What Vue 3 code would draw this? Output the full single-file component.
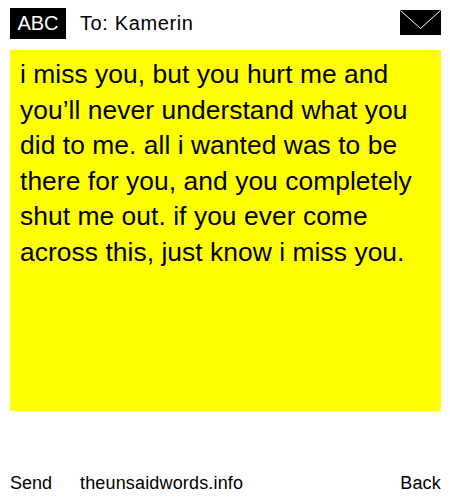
<script setup>
const message = "i miss you, but you hurt me and you’ll never understand what you did to me. all i wanted was to be there for you, and you completely shut me out. if you ever come across this, just know i miss you."
</script>

<template>
  <div class="page">
    <header class="top">
      <div class="left">
        <span class="abc">ABC</span>
        <span class="to">To: Kamerin</span>
      </div>
      <svg class="env" width="41" height="25" viewBox="0 0 41 25">
        <rect width="41" height="25" fill="#000" />
        <path d="M0.5 0.5 L20.5 18.5 L40.5 0.5" fill="none" stroke="#fff" stroke-width="1" />
      </svg>
    </header>
    <main class="note">{{ message }}</main>
    <footer class="bottom">
      <div class="left2">
        <span class="send">Send</span>
        <span class="site">theunsaidwords.info</span>
      </div>
      <span class="back">Back</span>
    </footer>
  </div>
</template>

<style scoped>
.page {
  width: 450px;
  height: 500px;
  box-sizing: border-box;
  padding: 8px 9px 0 10px;
  display: flex;
  flex-direction: column;
  font-family: "Liberation Sans", Arial, sans-serif;
  color: #000;
  background: #fff;
}
.top {
  height: 31px;
  display: flex;
  align-items: center;
  justify-content: space-between;
}
.left { display: flex; align-items: center; }
.abc {
  background: #000;
  color: #fff;
  font-size: 20px;
  line-height: 31px;
  width: 56px;
  text-align: center;
}
.to { font-size: 20px; letter-spacing: 0.62px; margin-left: 14px; }
.env { margin-bottom: 2px; }
.note {
  margin-top: 11px;
  height: 361px;
  box-sizing: border-box;
  background: #ff0;
  padding: 7px 10px;
  font-size: 26.4px;
  letter-spacing: 0.05px;
  line-height: 35.6px;
}
.bottom {
  margin-top: auto;
  height: 27px;
  display: flex;
  justify-content: space-between;
  align-items: flex-start;
  font-size: 18px;
}
.left2 { display: flex; }
.send { width: 70px; }
.site { letter-spacing: 0.16px; }
.back { letter-spacing: 0.2px; }
</style>
